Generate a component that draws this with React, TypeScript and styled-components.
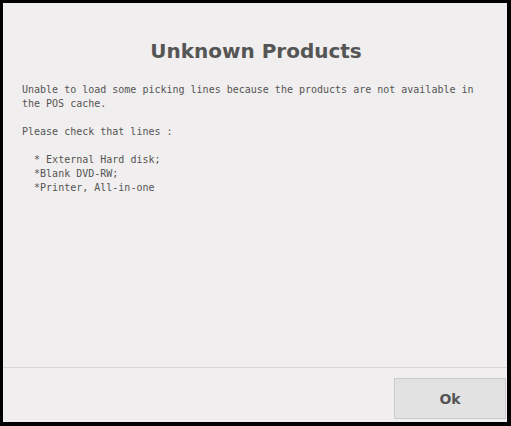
import React from "react";
import styled, { createGlobalStyle } from "styled-components";

const Global = createGlobalStyle`
  html, body { margin: 0; padding: 0; background: #000; }
  body { width: 511px; height: 426px; overflow: hidden; }
`;

const Frame = styled.div`
  box-sizing: border-box;
  width: 511px;
  height: 426px;
  padding: 3px 4px 4px 3px;
  background: #000;
`;

const Popup = styled.div`
  box-sizing: border-box;
  height: 100%;
  background: #f0eeee;
  display: flex;
  flex-direction: column;
`;

const Title = styled.h1`
  margin: 0;
  padding: 36px 0 0 2px;
  height: 72px;
  box-sizing: border-box;
  text-align: center;
  font-family: "DejaVu Sans", sans-serif;
  font-weight: bold;
  font-size: 20px;
  line-height: 24px;
  color: #555555;
`;

const Body = styled.pre`
  flex: 1;
  margin: 0;
  padding: 8px 19px 0;
  font-family: "DejaVu Sans Mono", monospace;
  font-size: 10px;
  line-height: 14px;
  color: #555555;
  white-space: pre-wrap;
`;

const Footer = styled.div`
  height: 55px;
  box-sizing: border-box;
  border-top: 1px solid #d8d6d6;
  display: flex;
  justify-content: flex-end;
  align-items: flex-end;
  padding: 0 1px 3px 0;
`;

const Button = styled.div`
  box-sizing: border-box;
  width: 112px;
  height: 41px;
  background: #e2e2e2;
  border: 1px solid #cbcbcb;
  display: flex;
  align-items: center;
  justify-content: center;
  font-family: "DejaVu Sans", sans-serif;
  font-weight: bold;
  font-size: 14px;
  color: #555555;
`;

const message = `Unable to load some picking lines because the products are not available in
the POS cache.

Please check that lines :

  * External Hard disk;
  *Blank DVD-RW;
  *Printer, All-in-one`;

export default function App() {
  return (
    <>
      <Global />
      <Frame>
        <Popup>
          <Title>Unknown Products</Title>
          <Body>{message}</Body>
          <Footer>
            <Button>Ok</Button>
          </Footer>
        </Popup>
      </Frame>
    </>
  );
}
